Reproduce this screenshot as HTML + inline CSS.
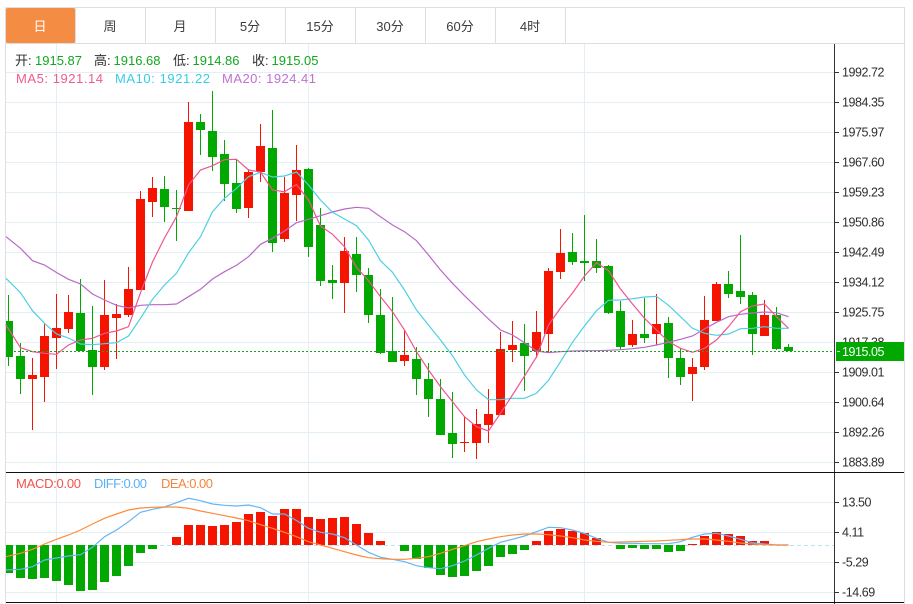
<!DOCTYPE html>
<html lang="zh">
<head>
<meta charset="utf-8">
<title>K线图</title>
<style>
html,body{margin:0;padding:0;background:#fff;width:913px;height:604px;overflow:hidden}
svg{display:block}
text{font-family:"Liberation Sans","Noto Sans CJK SC",sans-serif}
.tab{font-size:13px;fill:#3c3c3c;text-anchor:middle}
.ax{font-size:12.5px;fill:#2e2e2e;letter-spacing:-.45px}
.h{font-size:13px;fill:#2e2e2e}
.g{font-size:13px;fill:#12a71f}
</style>
</head>
<body>
<svg width="913" height="604" viewBox="0 0 913 604" xmlns="http://www.w3.org/2000/svg">
<rect width="913" height="604" fill="#fff"/>
<!-- grid -->
<path fill="none" stroke="#e3eef5" stroke-width="1" d="M6 72.5H834M6 102.5H834M6 132.5H834M6 162.5H834M6 192.5H834M6 222.5H834M6 252.5H834M6 282.5H834M6 312.5H834M6 342.5H834M6 372.5H834M6 402.5H834M6 432.5H834M6 462.5H834M6 502.5H834M6 532.5H834M6 562.5H834M6 592.5H834M56.5 44V602M308.5 44V602M584.5 44V602"/>
<!-- frame and tabs -->
<path fill="none" stroke="#dedede" stroke-width="1" d="M5.5 7.5H904.5V604M5.5 7.5V604M5.5 43.5H904.5M75.5 8V43M145.5 8V43M215.5 8V43M285.5 8V43M355.5 8V43M425.5 8V43M495.5 8V43M565.5 8V43"/>
<rect x="6" y="8" width="69" height="35" rx="1.5" fill="#f48d43"/>
<text class="tab" x="40" y="31" style="fill:#fff">日</text>
<text class="tab" x="110" y="31">周</text>
<text class="tab" x="180" y="31">月</text>
<text class="tab" x="250" y="31">5分</text>
<text class="tab" x="320" y="31">15分</text>
<text class="tab" x="390" y="31">30分</text>
<text class="tab" x="460" y="31">60分</text>
<text class="tab" x="530" y="31">4时</text>
<!-- green wicks -->
<path fill="none" stroke="#00a800" stroke-width="1" d="M8.5 295V366M20.5 343V394M80.5 279V351M92.5 306V395M164.5 176V222M176.5 190V241M200.5 114V155M212.5 91V171M224.5 140V201M236.5 160V213M272.5 110V252M308.5 168V257M320.5 208V286M332.5 265V299M356.5 237V292M368.5 268V323M380.5 289V354M392.5 297V362M416.5 347V395M428.5 363V417M440.5 379V435M452.5 392V458M524.5 324V391M572.5 233V265M584.5 215V281M596.5 239V273M608.5 265V314M620.5 301V350M644.5 298V343M668.5 317V378M680.5 348V385M728.5 271V298M740.5 235V304M752.5 292V355M776.5 307V350M788.5 344V351"/>
<!-- red wicks -->
<path fill="none" stroke="#f51400" stroke-width="1" d="M32.5 358V430M44.5 324V402M56.5 294V369M68.5 295V333M104.5 280V370M116.5 304V359M128.5 267V317M140.5 191V290M152.5 177V217M188.5 102V211M248.5 169V218M260.5 124V182M284.5 177V242M296.5 145V221M344.5 237V313M404.5 330V366M464.5 417V452M476.5 409V459M488.5 389V443M500.5 332V415M512.5 321V362M536.5 311V358M548.5 268V353M560.5 229V279M632.5 320V347M656.5 294V345M692.5 358V401M704.5 296V370M716.5 282V321M764.5 300V336"/>
<!-- green bodies -->
<path fill="#00a800" d="M6 321H13V357H6zM16 356h9v23h-9zM76 313h9v38h-9zM88 350h9v17h-9zM160 189h9v18h-9zM172 208h9v1h-9zM196 122h9v8h-9zM208 131h9v26h-9zM220 154h9v30h-9zM232 183h9v26h-9zM268 148h9v95h-9zM304 169h9v78h-9zM316 225h9v56h-9zM328 280h9v3h-9zM352 254h9v21h-9zM364 275h9v40h-9zM376 315h9v38h-9zM388 351h9v11h-9zM412 359h9v20h-9zM424 379h9v20h-9zM436 399h9v36h-9zM448 433h9v11h-9zM520 343h9v13h-9zM568 252h9v10h-9zM580 261h9v2h-9zM592 261h9v7h-9zM604 266h9v47h-9zM616 311h9v36h-9zM640 334h9v4h-9zM664 323h9v35h-9zM676 358h9v19h-9zM724 284h9v10h-9zM736 291h9v6h-9zM748 295h9v39h-9zM772 315h9v34h-9zM784 347h9v4h-9z"/>
<!-- red bodies -->
<path fill="#f51400" d="M28 375h9v4h-9zM40 336h9v41h-9zM52 328h9v10h-9zM64 312h9v17h-9zM100 315h9v52h-9zM112 314h9v4h-9zM124 289h9v26h-9zM136 199h9v91h-9zM148 188h9v14h-9zM184 122h9v89h-9zM244 172h9v36h-9zM256 146h9v26h-9zM280 193h9v46h-9zM292 170h9v25h-9zM340 251h9v32h-9zM400 355h9v6h-9zM460 442h9v1h-9zM472 424h9v19h-9zM484 414h9v11h-9zM496 349h9v66h-9zM508 345h9v5h-9zM532 332h9v19h-9zM544 271h9v63h-9zM556 253h9v19h-9zM628 334h9v11h-9zM652 324h9v10h-9zM688 367h9v7h-9zM700 320h9v47h-9zM712 284h9v37h-9zM760 315h9v21h-9z"/>
<!-- MA20 -->
<polyline fill="none" stroke="#ba68c8" stroke-width="1.2" points="6,236.7 20.5,248.3 32.5,260.7 44.5,265 56.5,272.5 68.5,279.3 80.5,284 92.5,294 104.5,300 116.5,305.3 128.5,308 140.5,305.3 152.5,304.7 164.5,304.7 176.5,304 188.5,296.7 200.5,289.3 212.5,279 224.5,271.7 236.5,265.3 248.5,256.7 260.5,244.3 272.5,238.3 284.5,231 296.5,222.7 308.5,219.3 320.5,215.7 332.5,212 344.5,209 356.5,207.3 368.5,208.3 380.5,216.7 392.5,225 404.5,231.7 416.5,240.7 428.5,255 440.5,270 452.5,283.3 464.5,295.7 476.5,307.3 488.5,319 500.5,330 512.5,335 524.5,342.7 536.5,351 548.5,352.7 560.5,351.7 572.5,351 584.5,350.7 596.5,350.7 608.5,350.3 620.5,349.7 632.5,348.7 644.5,347.3 656.5,345 668.5,342.3 680.5,339.3 692.5,336 704.5,329 716.5,322.3 728.5,316.7 740.5,314.3 752.5,313 764.5,312 776.5,312.7 788.5,316.7"/>
<!-- MA10 -->
<polyline fill="none" stroke="#4dd0e1" stroke-width="1.2" points="6,278.3 20.5,292.7 32.5,310.7 44.5,323.3 56.5,334 68.5,338 80.5,344 92.5,344.7 104.5,343.7 116.5,342.7 128.5,336 140.5,318.3 152.5,299.3 164.5,285 176.5,273.3 188.5,253 200.5,236.7 212.5,211.7 224.5,198.3 236.5,188.3 248.5,176.7 260.5,172.3 272.5,177 284.5,176 296.5,172 308.5,185 320.5,200 332.5,212.3 344.5,219 356.5,225.7 368.5,240 380.5,260.7 392.5,272.3 404.5,290 416.5,310 428.5,325 440.5,340 452.5,355.7 464.5,375 476.5,390 488.5,399.7 500.5,399.7 512.5,398.3 524.5,398.3 536.5,393.3 548.5,380.3 560.5,361.7 572.5,342.3 584.5,326 596.5,310.7 608.5,300.3 620.5,300 632.5,298.7 644.5,297 656.5,296.3 668.5,305.3 680.5,316.7 692.5,328.3 704.5,333.3 716.5,335.3 728.5,334 740.5,328.7 752.5,328.3 764.5,326.7 776.5,328.3 788.5,328.3"/>
<!-- MA5 -->
<polyline fill="none" stroke="#ef5690" stroke-width="1.2" points="6,325 20.5,347.7 32.5,351.7 44.5,353.3 56.5,354.3 68.5,345 80.5,340 92.5,338.3 104.5,333.3 116.5,331 128.5,326.7 140.5,292.7 152.5,262 164.5,238 176.5,216.7 188.5,185 200.5,170 212.5,165.7 224.5,159.7 236.5,159.3 248.5,170 260.5,172 272.5,190 284.5,191.7 296.5,184.5 308.5,200 320.5,226 332.5,234.3 344.5,246.7 356.5,267.3 368.5,280.7 380.5,296.7 392.5,311.7 404.5,330 416.5,351.7 428.5,370 440.5,386.7 452.5,401.7 464.5,416.7 476.5,426.7 488.5,431 500.5,413.3 512.5,395 524.5,376 536.5,357 548.5,325 560.5,308 572.5,293 584.5,276 596.5,262.7 608.5,270.7 620.5,289 632.5,304 644.5,318.3 656.5,330 668.5,341.7 680.5,348.3 692.5,352.3 704.5,348.3 716.5,340 728.5,326.7 740.5,311.7 752.5,306 764.5,304 776.5,316.7 788.5,328.3"/>
<!-- last price line -->
<line x1="6" y1="351.5" x2="834" y2="351.5" stroke="#12a71f" stroke-width="1" stroke-dasharray="2 2"/>
<!-- header -->
<text class="h" x="15" y="65">开:</text><text class="g" x="35" y="65">1915.87</text>
<text class="h" x="94" y="65">高:</text><text class="g" x="113.5" y="65">1916.68</text>
<text class="h" x="173" y="65">低:</text><text class="g" x="192.5" y="65">1914.86</text>
<text class="h" x="252" y="65">收:</text><text class="g" x="271.5" y="65">1915.05</text>
<text x="16" y="83" font-size="13" fill="#f25a8e" textLength="87">MA5:  1921.14</text>
<text x="115" y="83" font-size="13" fill="#37cde6" textLength="95">MA10:  1921.22</text>
<text x="222" y="83" font-size="13" fill="#c170d2" textLength="94">MA20:  1924.41</text>
<!-- axis -->
<path fill="none" stroke="#333" stroke-width="1" d="M834.5 44V604M835 72.5H839M835 102.5H839M835 132.5H839M835 162.5H839M835 192.5H839M835 222.5H839M835 252.5H839M835 282.5H839M835 312.5H839M835 372.5H839M835 402.5H839M835 432.5H839M835 462.5H839M835 502.5H839M835 532.5H839M835 562.5H839M835 592.5H839"/>
<path fill="none" stroke="#111" stroke-width="1" d="M6 472.5H904M6 602.5H904"/>
<text class="ax" x="842" y="76.5">1992.72</text>
<text class="ax" x="842" y="106.5">1984.35</text>
<text class="ax" x="842" y="136.5">1975.97</text>
<text class="ax" x="842" y="166.5">1967.60</text>
<text class="ax" x="842" y="196.5">1959.23</text>
<text class="ax" x="842" y="226.5">1950.86</text>
<text class="ax" x="842" y="256.5">1942.49</text>
<text class="ax" x="842" y="286.5">1934.12</text>
<text class="ax" x="842" y="316.5">1925.75</text>
<text class="ax" x="842" y="346.5">1917.38</text>
<text class="ax" x="842" y="376.5">1909.01</text>
<text class="ax" x="842" y="406.5">1900.64</text>
<text class="ax" x="842" y="436.5">1892.26</text>
<text class="ax" x="842" y="466.5">1883.89</text>
<rect x="836" y="342" width="68" height="19" fill="#00a800"/>
<rect x="837" y="351" width="3" height="1" fill="#d5f0d5"/>
<text class="ax" x="842" y="356" style="fill:#fff">1915.05</text>
<!-- MACD -->
<text x="16" y="488" font-size="13" fill="#f0534c" textLength="65">MACD:0.00</text>
<text x="94" y="488" font-size="13" fill="#5cb0f5" textLength="53">DIFF:0.00</text>
<text x="161" y="488" font-size="13" fill="#f5853c" textLength="52">DEA:0.00</text>
<line x1="6" y1="545.5" x2="834" y2="545.5" stroke="#bfe0ee" stroke-width="1" stroke-dasharray="4 3"/>
<path fill="#00a800" d="M6 545H13V573H6zM16 545h9v33h-9zM28 545h9v34h-9zM40 545h9v33h-9zM52 545h9v36h-9zM64 545h9v40h-9zM76 545h9v46h-9zM88 545h9v45h-9zM100 545h9v37h-9zM112 545h9v31h-9zM124 545h9v21h-9zM136 545h9v8h-9zM148 545h9v4h-9zM400 545h9v6h-9zM412 545h9v14h-9zM424 545h9v23h-9zM436 545h9v30h-9zM448 545h9v32h-9zM460 545h9v31h-9zM472 545h9v26h-9zM484 545h9v21h-9zM496 545h9v12h-9zM508 545h9v9h-9zM520 545h9v5h-9zM616 545h9v4h-9zM628 545h9v3h-9zM640 545h9v4h-9zM652 545h9v4h-9zM664 545h9v7h-9zM676 545h9v6h-9z"/>
<path fill="#f51400" d="M172 537h9v8h-9zM184 525h9v20h-9zM196 525h9v20h-9zM208 526h9v19h-9zM220 525h9v20h-9zM232 522h9v23h-9zM244 514h9v31h-9zM256 512h9v33h-9zM268 516h9v29h-9zM280 509h9v36h-9zM292 509h9v36h-9zM304 517h9v28h-9zM316 519h9v26h-9zM328 518h9v27h-9zM340 517h9v28h-9zM352 524h9v21h-9zM364 533h9v12h-9zM376 541h9v4h-9zM532 541h9v4h-9zM544 531h9v14h-9zM556 529h9v16h-9zM568 531h9v14h-9zM580 533h9v12h-9zM592 538h9v7h-9zM688 544h9v1h-9zM700 536h9v9h-9zM712 532h9v13h-9zM724 534h9v11h-9zM736 536h9v9h-9zM748 541h9v4h-9zM760 541h9v4h-9z"/>
<polyline fill="none" stroke="#64b5f6" stroke-width="1.2" points="6,570 20.5,569.3 32.5,566.7 44.5,560 56.5,558 68.5,556 80.5,554.7 92.5,547.3 104.5,536.7 116.5,530 128.5,521.7 140.5,512.3 152.5,509.3 164.5,507 176.5,502.7 188.5,498.3 200.5,500.7 212.5,504 224.5,505.3 236.5,506 248.5,505 260.5,507.7 272.5,514 284.5,514 296.5,520.5 308.5,528.3 320.5,532.3 332.5,534 344.5,537.7 356.5,545 368.5,552.3 380.5,557.3 392.5,559.3 404.5,561.7 416.5,565.7 428.5,567.7 440.5,568.7 452.5,565.7 464.5,561 476.5,555 488.5,548.3 500.5,542.3 512.5,539.3 524.5,536 536.5,531.7 548.5,527.3 560.5,527.7 572.5,530 584.5,533.5 596.5,538.3 608.5,542.3 620.5,543.3 632.5,543.3 644.5,543.7 656.5,543.7 668.5,543.7 680.5,541.7 692.5,537.3 704.5,534 716.5,533.3 728.5,536 740.5,539.3 752.5,542.7 764.5,544 776.5,545 788.5,545"/>
<polyline fill="none" stroke="#ff8a3c" stroke-width="1.2" points="6,556.7 20.5,553.3 32.5,549.3 44.5,544 56.5,539.3 68.5,535 80.5,530 92.5,524 104.5,518.3 116.5,514 128.5,510 140.5,508 152.5,507.3 164.5,507 176.5,507 188.5,508.3 200.5,511 212.5,513.3 224.5,515.7 236.5,518 248.5,520.7 260.5,524.7 272.5,528.3 284.5,532.3 296.5,536.7 308.5,541.7 320.5,545 332.5,548.3 344.5,551.7 356.5,555 368.5,557.7 380.5,558.7 392.5,559.3 404.5,559.3 416.5,558.3 428.5,556.7 440.5,553.3 452.5,549.3 464.5,545.7 476.5,541.7 488.5,539 500.5,536.7 512.5,535 524.5,534 536.5,534 548.5,534.7 560.5,536 572.5,537.7 584.5,540 596.5,541.3 608.5,542.3 620.5,542 632.5,541.7 644.5,541.3 656.5,541 668.5,540.3 680.5,539.7 692.5,539 704.5,539 716.5,540 728.5,541.3 740.5,543 752.5,544 764.5,544.7 776.5,545 788.5,545"/>
<text class="ax" x="842" y="506.5">13.50</text>
<text class="ax" x="842" y="536.5">4.11</text>
<text class="ax" x="842" y="566.5">-5.29</text>
<text class="ax" x="842" y="596.5">-14.69</text>
</svg>
</body>
</html>
